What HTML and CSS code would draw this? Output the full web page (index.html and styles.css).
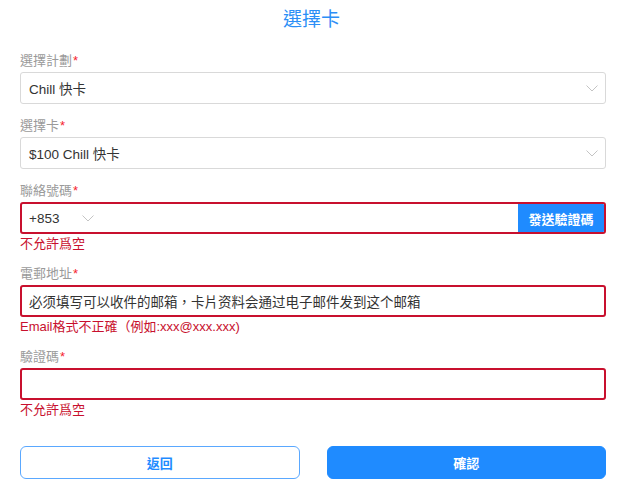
FILE: index.html
```html
<!DOCTYPE html>
<html lang="zh-Hant">
<head>
<meta charset="utf-8">
<title>選擇卡</title>
<link rel="stylesheet" href="styles.css">
</head>
<body>
<div class="page">
  <h1 class="title">選擇卡</h1>
  <form class="form">
    <div class="field">
      <div class="label">選擇計劃<span class="req">*</span></div>
      <div class="box select">
        <span class="value">Chill 快卡</span>
        <svg class="chev" width="12" height="7" viewBox="0 0 12 7"><path d="M0.5 0.5 L6 6 L11.5 0.5" fill="none" stroke="#c4c4c4" stroke-width="1"/></svg>
      </div>
    </div>
    <div class="field">
      <div class="label">選擇卡<span class="req">*</span></div>
      <div class="box select">
        <span class="value">$100 Chill 快卡</span>
        <svg class="chev" width="12" height="7" viewBox="0 0 12 7"><path d="M0.5 0.5 L6 6 L11.5 0.5" fill="none" stroke="#c4c4c4" stroke-width="1"/></svg>
      </div>
    </div>
    <div class="field">
      <div class="label">聯絡號碼<span class="req">*</span></div>
      <div class="box error phone">
        <span class="code">+853</span>
        <svg class="chev small" width="12" height="7" viewBox="0 0 12 7"><path d="M0.5 0.5 L6 6 L11.5 0.5" fill="none" stroke="#c4c4c4" stroke-width="1"/></svg>
        <span class="spacer"></span>
        <button type="button" class="send">發送驗證碼</button>
      </div>
      <div class="err">不允許爲空</div>
    </div>
    <div class="field">
      <div class="label">電郵地址<span class="req">*</span></div>
      <div class="box error">
        <span class="value">必须填写可以收件的邮箱，卡片资料会通过电子邮件发到这个邮箱</span>
      </div>
      <div class="err">Email格式不正確（例如:xxx@xxx.xxx)</div>
    </div>
    <div class="field">
      <div class="label">驗證碼<span class="req">*</span></div>
      <div class="box error"></div>
      <div class="err">不允許爲空</div>
    </div>
    <div class="actions">
      <button type="button" class="btn ghost">返回</button>
      <button type="button" class="btn primary">確認</button>
    </div>
  </form>
</div>
</body>
</html>
```
FILE: styles.css
```css
* { box-sizing: border-box; }
html, body { margin: 0; padding: 0; background: #fff; }
body {
  font-family: "Liberation Sans", "Noto Sans CJK TC", "Noto Sans CJK SC", sans-serif;
  font-size: 13px;
  color: #333;
}
.page { padding: 0 13px 0 20px; }
.title {
  margin: 0;
  padding-top: 6px;
  height: 51px;
  font-size: 19px;
  line-height: 28px;
  font-weight: 400;
  color: #2b8ef6;
  text-align: center;
  padding-right: 3px;
}
.form { display: flex; flex-direction: column; }
.field { display: flex; flex-direction: column; margin-bottom: 12px; }
.label {
  height: 20px;
  line-height: 20px;
  margin-bottom: 1px;
  color: #9a9a9a;
  font-size: 13px;
}
.req { color: #f5222d; margin-left: 1px; }
.box {
  height: 32px;
  border: 1px solid #d9d9d9;
  border-radius: 3px;
  display: flex;
  align-items: center;
  padding: 0 0 0 8px;
  background: #fff;
  font-size: 13.5px;
}
.box.select { padding-right: 7px; }
.value { flex: 1; color: #333; white-space: nowrap; }
.chev { flex: none; }
.chev.small { margin-left: 23px; }
.box.error {
  border: 2px solid #c8102e;
  padding-left: 7px;
}
.phone { padding-right: 0; overflow: hidden; }
.spacer { flex: 1; }
.send {
  height: 100%;
  width: 86px;
  border: none;
  background: #1f8bff;
  color: #fff;
  font-family: inherit;
  font-size: 13px;
  font-weight: 700;
  padding: 0;
  border-radius: 0;
}
.err {
  color: #c8102e;
  font-size: 13px;
  line-height: 19px;
  margin-bottom: -1px;
}
.actions {
  display: grid;
  grid-template-columns: 1fr 1fr;
  column-gap: 27px;
  margin-top: 16px;
}
.btn {
  height: 33px;
  border-radius: 6px;
  font-family: inherit;
  font-size: 13px;
  font-weight: 700;
  cursor: pointer;
}
.btn.ghost {
  background: #fff;
  border: 1px solid #5aa8ff;
  color: #1f8bff;
}
.btn.primary {
  background: #1f8bff;
  border: 1px solid #1f8bff;
  color: #fff;
}
```
